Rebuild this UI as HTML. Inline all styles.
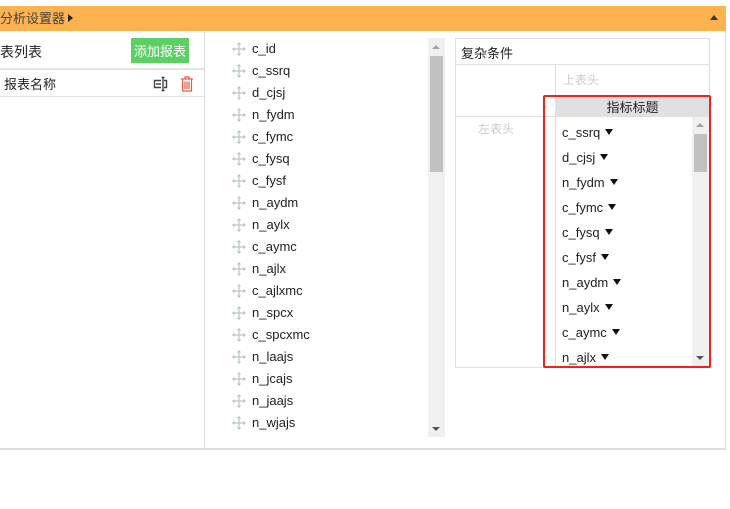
<!DOCTYPE html>
<html><head><meta charset="utf-8"><style>
body{margin:0;width:730px;height:509px;background:#fff;position:relative;overflow:hidden;font-family:"Liberation Sans","Microsoft YaHei","Noto Sans CJK SC",sans-serif;font-size:13px;color:#333}
.a{position:absolute}
.cn{font-family:"Noto Sans CJK SC",sans-serif}
.it{position:absolute;left:230px;height:22px;line-height:22px;font-size:13px;color:#222}
.it svg{position:absolute;left:1px;top:3px}
.it span{position:absolute;left:22px;white-space:nowrap}
.ri{position:absolute;left:562px;font-size:13px;color:#222;line-height:20px}
.tri{display:inline-block;width:0;height:0;border-left:4px solid transparent;border-right:4px solid transparent;border-top:6px solid #111;margin-left:5px;vertical-align:2px}
</style></head><body>
<div class="a" style="left:0;top:6px;width:726px;height:25px;background:#fbb24f"></div>
<div class="a cn" style="left:0;top:8px;font-size:13px;line-height:20px;color:#444">分析设置器</div>
<div class="a" style="left:68px;top:14px;border-top:4px solid transparent;border-bottom:4px solid transparent;border-left:5px solid #222"></div>
<div class="a" style="left:710px;top:15px;border-left:4px solid transparent;border-right:4px solid transparent;border-bottom:5px solid #333"></div>
<div class="a" style="left:0;top:31px;width:725px;height:417px;border-right:1px solid #ddd;border-bottom:2px solid #ddd"></div>
<div class="a" style="left:204px;top:32px;width:1px;height:417px;background:#ddd"></div>
<div class="a" style="left:0;top:68px;width:204px;height:2px;background:#e3e3e3"></div>
<div class="a cn" style="left:0;top:41px;font-size:14px;line-height:22px;color:#222">表列表</div>
<div class="a cn" style="left:131px;top:38px;width:58px;height:25px;background:#5cd065;color:#fff;font-size:13px;line-height:25px;text-align:center">添加报表</div>
<div class="a cn" style="left:4px;top:74px;font-size:13px;line-height:20px;color:#222">报表名称</div>
<svg class="a" style="left:153px;top:76px" width="16" height="16" viewBox="0 0 16 16"><path d="M8 4.5H1.5V11.5H8M11 4.5H13.5V11.5H11M10 1.5V14.5M8.5 1.5H11.5M8.5 14.5H11.5M3 8H8" fill="none" stroke="#444" stroke-width="1.4"/></svg>
<svg class="a" style="left:180px;top:76px" width="14" height="16" viewBox="0 0 14 16"><path d="M1 3H13M5 3V1H9V3M2.5 3V15H11.5V3M5 5.5V13M7 5.5V13M9 5.5V13" fill="none" stroke="#ea5a4a" stroke-width="1.2"/></svg>
<div class="a" style="left:0;top:96px;width:204px;height:1px;background:#e3e3e3"></div>
<div id="mid"></div>
<div class="a" style="left:428px;top:38px;width:17px;height:399px;background:#f0f0f0"></div>
<div class="a" style="left:430px;top:56px;width:13px;height:116px;background:#c1c1c1"></div>
<div class="a" style="left:432px;top:45px;border-left:4px solid transparent;border-right:4px solid transparent;border-bottom:4px solid #a3a3a3"></div>
<div class="a" style="left:432px;top:427px;border-left:4px solid transparent;border-right:4px solid transparent;border-top:4px solid #555"></div>
<div class="a" style="left:455px;top:38px;width:253px;height:328px;border:1px solid #e0e0e0"></div>
<div class="a" style="left:456px;top:64px;width:253px;height:1px;background:#e0e0e0"></div>
<div class="a" style="left:555px;top:65px;width:1px;height:302px;background:#e0e0e0"></div>
<div class="a" style="left:456px;top:116px;width:99px;height:1px;background:#e0e0e0"></div>
<div class="a cn" style="left:461px;top:43px;font-size:13px;line-height:20px;color:#222">复杂条件</div>
<div class="a cn" style="left:563px;top:70px;font-size:12px;line-height:20px;color:#ccc">上表头</div>
<div class="a cn" style="left:478px;top:119px;font-size:12px;line-height:20px;color:#ccc">左表头</div>
<div class="a" style="left:556px;top:97px;width:153px;height:20px;background:#e0e0e0"></div>
<div class="a cn" style="left:556px;top:97px;width:153px;text-align:center;font-size:13px;line-height:20px;color:#222">指标标题</div>
<div class="a" style="left:692px;top:117px;width:17px;height:249px;background:#f0f0f0"></div>
<div class="a" style="left:694px;top:134px;width:13px;height:38px;background:#c1c1c1"></div>
<div class="a" style="left:696px;top:123px;border-left:4px solid transparent;border-right:4px solid transparent;border-bottom:4px solid #a3a3a3"></div>
<div class="a" style="left:696px;top:356px;border-left:4px solid transparent;border-right:4px solid transparent;border-top:4px solid #555"></div>
<div id="rl"></div>
<div class="a" style="left:543px;top:95px;width:164px;height:269px;border:2px solid #f0231c;border-radius:2px"></div>
<script>
var m=["c_id","c_ssrq","d_cjsj","n_fydm","c_fymc","c_fysq","c_fysf","n_aydm","n_aylx","c_aymc","n_ajlx","c_ajlxmc","n_spcx","c_spcxmc","n_laajs","n_jcajs","n_jaajs","n_wjajs"];
var ic='<svg width="16" height="16" viewBox="0 0 16 16"><path d="M8 2V14M2 8H14" stroke="#b9c7c5" stroke-width="1.2"/><path d="M8 1L5.8 3.5H10.2ZM8 15L5.8 12.5H10.2ZM1 8L3.5 5.8V10.2ZM15 8L12.5 5.8V10.2Z" fill="#b9c7c5"/></svg>';
var h="";m.forEach(function(t,i){h+='<div class="it" style="top:'+(38+i*22)+'px">'+ic+'<span>'+t+'</span></div>'});
document.getElementById("mid").innerHTML=h;
var r=["c_ssrq","d_cjsj","n_fydm","c_fymc","c_fysq","c_fysf","n_aydm","n_aylx","c_aymc","n_ajlx"];
h="";r.forEach(function(t,i){h+='<div class="ri" style="top:'+(123+i*25)+'px">'+t+'<span class="tri"></span></div>'});
document.getElementById("rl").innerHTML=h;
</script>
</body></html>
